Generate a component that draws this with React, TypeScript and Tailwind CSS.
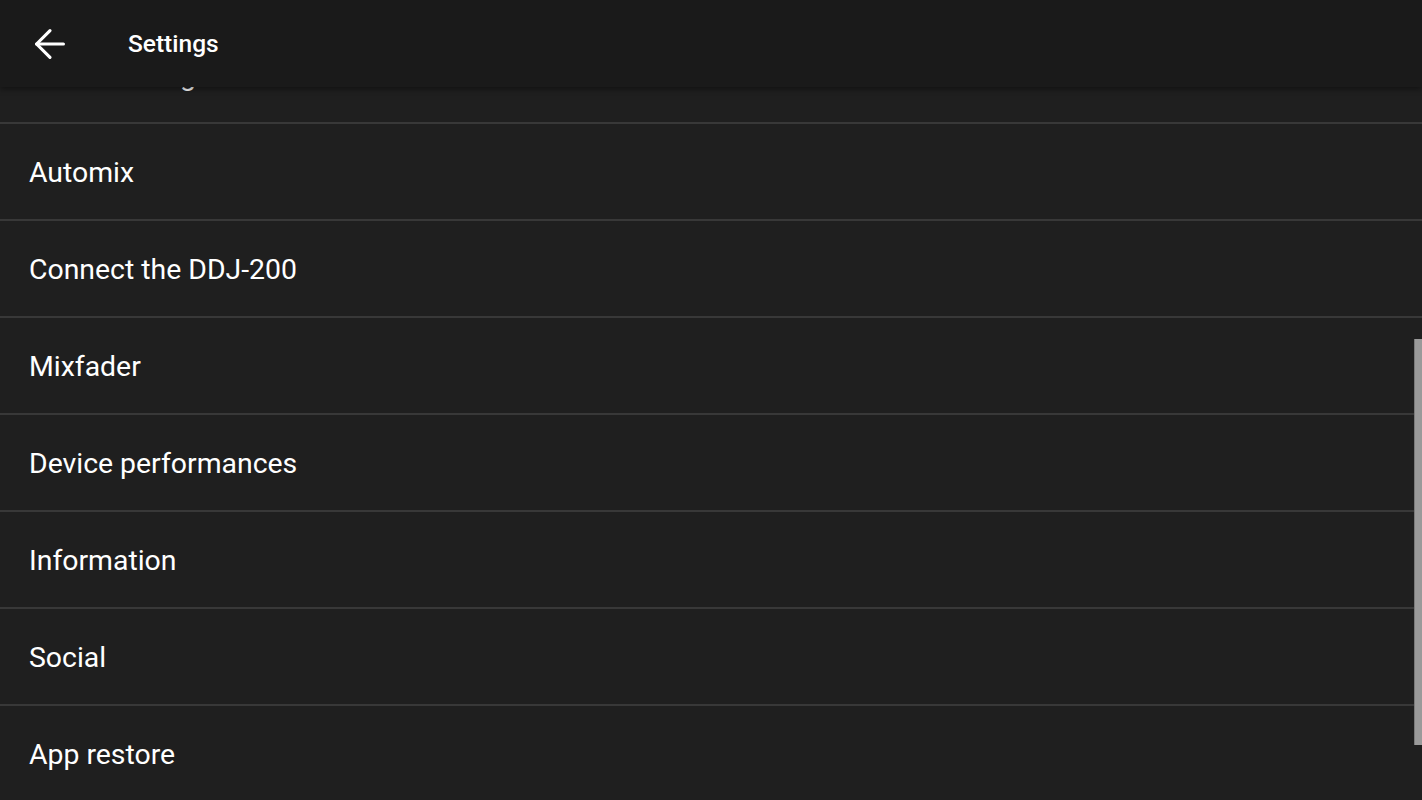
import { ArrowLeft } from "lucide-react";

const items = [
  "Audio settings",
  "Automix",
  "Connect the DDJ-200",
  "Mixfader",
  "Device performances",
  "Information",
  "Social",
  "App restore",
];

export default function App() {
  return (
    <div
      className="relative h-[800px] w-[1422px] overflow-hidden bg-[#1f1f1f] text-white"
      style={{ fontFamily: "Roboto, 'Noto Sans', sans-serif" }}
    >
      {/* Top bar */}
      <header className="absolute top-0 left-0 right-0 z-10 flex h-[87px] items-center bg-[#1a1a1a] shadow-[0_2px_6px_rgba(0,0,0,0.45)]">
        <div className="flex w-[100px] justify-center">
          <ArrowLeft size={46} strokeWidth={1.65} className="text-white" />
        </div>
        <h1 className="ml-[28px] pt-[2px] text-[24.5px] font-medium">Settings</h1>
      </header>

      {/* List */}
      <ul className="pt-[27px]">
        {items.map((label) => (
          <li
            key={label}
            className="flex h-[97px] items-center border-b-2 border-[#383838] pl-[29px] pt-[3px] text-[28.4px]"
          >
            {label}
          </li>
        ))}
      </ul>

      {/* Scrollbar */}
      <div className="absolute right-0 top-[339px] h-[406px] w-[8px] border-l border-[#7a7a7a] bg-[#9a9a9a]" />
    </div>
  );
}
